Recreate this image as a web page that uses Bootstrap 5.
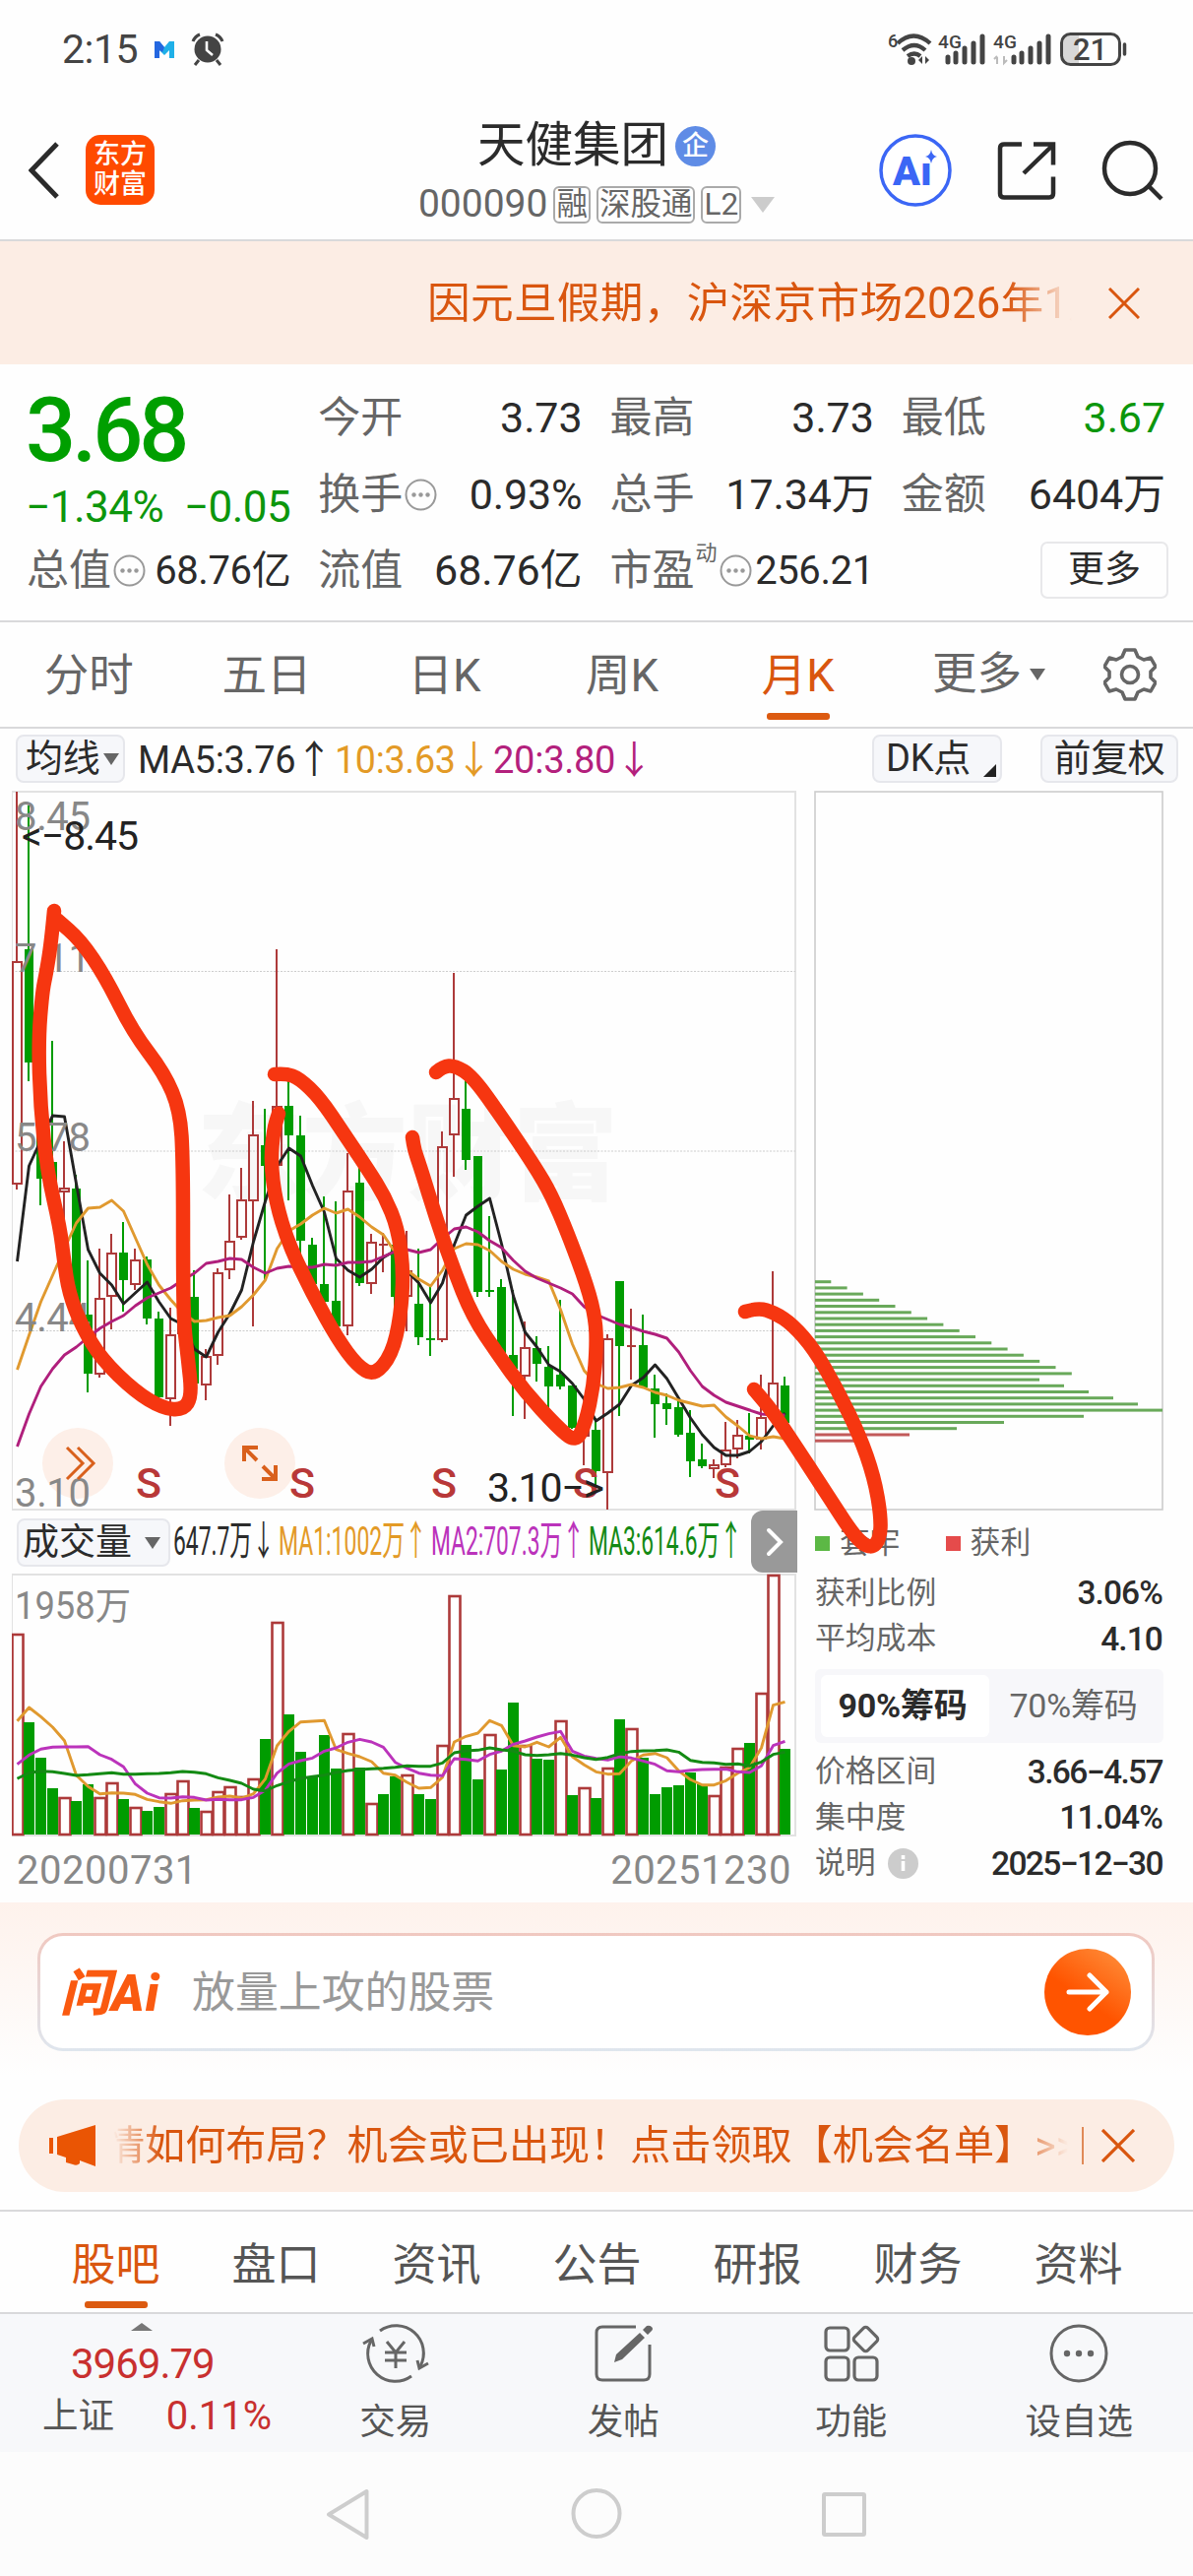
<!DOCTYPE html>
<html lang="zh-CN">

<head>
    <meta charset="UTF-8">
    <meta name="viewport" content="width=device-width, initial-scale=1.0">
    <title>天健集团 000090</title>
    <link href="https://cdn.jsdelivr.net/npm/bootstrap@5.3.2/dist/css/bootstrap.min.css" rel="stylesheet">
    <style>
        body {
            width: 1212px;
            font-family: Roboto, "Noto Sans CJK SC", sans-serif;
            color: #2b2b2b;
            background: #fefefe;
            line-height: 1;
            overflow-x: hidden;
        }

        svg {
            display: block;
            flex: none;
        }

        .nowrap {
            white-space: nowrap;
        }

        .hairline {
            border-bottom: 2px solid #d9d9db;
        }

        .c-label {
            color: #666;
        }

        .c-down {
            color: #0c960c;
        }

        .c-accent {
            color: #d9560f;
        }

        /* Status bar */
        .status-bar {
            height: 100px;
            padding: 0 66px 0 63px;
            color: #444;
        }

        .status-time {
            font-size: 41px;
            letter-spacing: -.5px;
            width: 94px;
        }

        /* Header */
        .top-bar {
            height: 145px;
            padding: 2px 30px 0 29px;
        }

        .app-logo {
            width: 70px;
            height: 71px;
            border-radius: 15px;
            background: #ff4a00;
            color: #fff;
            font-size: 27px;
            line-height: 30px;
            font-weight: 500;
            margin-left: 27px;
            padding-top: 5px;
        }

        .stock-head {
            width: 366px;
            margin-left: 266px;
        }

        .stock-name {
            font-size: 48.5px;
            line-height: 60px;
        }

        .corp-mark {
            width: 41px;
            height: 41px;
            border-radius: 50%;
            background: #5f8ce6;
            color: #fff;
            font-size: 27px;
            font-weight: 500;
            line-height: 40px;
            margin-left: 7px;
        }

        .stock-code {
            font-size: 39px;
            color: #666;
            gap: 6px;
            margin-top: 10px;
        }

        .code-tag {
            height: 38px;
            border: 2px solid #aaa;
            border-radius: 6px;
            font-size: 31.5px;
            line-height: 34px;
            padding: 0 1px;
        }

        .caret {
            width: 0;
            height: 0;
            border: 8px solid transparent;
            border-top: 12px solid #666;
            border-bottom: 0;
        }

        /* Notices */
        .notice-top {
            height: 125px;
            background: #fcede4;
            font-size: 43.7px;
            letter-spacing: .25px;
            padding: 0 54px 0 434px;
        }

        .notice-top .roll {
            width: 655px;
            line-height: 60px;
            overflow: hidden;
            -webkit-mask-image: linear-gradient(90deg, #000 90%, transparent);
            mask-image: linear-gradient(90deg, #000 90%, transparent);
        }

        /* Quote grid */
        .quote {
            height: 262px;
            padding: 16px 28px 0;
            display: grid;
            grid-template-columns: repeat(4, 1fr);
            grid-auto-rows: 77.5px;
            column-gap: 29px;
            font-size: 43px;
        }

        .quote > div {
            display: flex;
            align-items: center;
            justify-content: space-between;
            white-space: nowrap;
        }

        .quote .price {
            font-size: 90px;
            font-weight: 500;
            letter-spacing: -4px;
            margin-left: -2px;
            padding-top: 26px;
            color: #009f00;
        }

        .quote .chg {
            padding: 25px 0 0;
            margin-left: -2px;
            font-size: 44px;
            letter-spacing: -.5px;
        }

        .quote b {
            font-weight: 400;
            letter-spacing: -.1px;
        }

        .quote .tight {
            font-size: 40px;
            letter-spacing: -.4px;
        }

        .quote .c-label {
            display: flex;
            align-items: center;
            gap: 2px;
            margin-left: -1px;
        }

        .quote sup {
            font-size: 22px;
            top: -18px;
            margin: 0 0 0 -1px;
        }

        .more-btn {
            width: 130px;
            height: 58px;
            border: 2px solid #e8e8ea;
            border-radius: 7px;
            font-size: 37px;
            line-height: 53px;
            text-align: center;
            margin-left: auto;
            margin-right: -3px;
            margin-top: -2px;
        }

        /* Period tabs */
        .period-tabs {
            height: 108px;
            font-size: 45.5px;
            color: #666;
            padding-right: 37px;
        }

        .period-tabs .tab {
            width: 180.6px;
            height: 106px;
            line-height: 110px;
            text-align: center;
        }

        .period-tabs .tab-more {
            width: auto;
            margin-left: 44px;
        }

        .period-tabs .tab-on {
            left: -2px;
        }

        .tab-on {
            position: relative;
            color: #d9560f;
        }

        .tab-on::after {
            content: "";
            position: absolute;
            left: 50%;
            bottom: 7px;
            width: 64px;
            height: 7px;
            margin-left: -32px;
            border-radius: 3px;
            background: #dc5a10;
        }

        /* Indicator row */
        .ind-row {
            height: 63px;
            padding: 6px 15px 0 16px;
            font-size: 38px;
            letter-spacing: -.3px;
        }

        .pill {
            height: 49px;
            background: #f6f7fa;
            border: 2px solid #e6e7ec;
            border-radius: 8px;
            line-height: 45px;
            white-space: nowrap;
        }

        /* Charts */
        .chart-area {
            height: 1129px;
        }

        .chart-left {
            width: 798px;
            margin-left: 12px;
        }

        .vol-head {
            height: 64px;
        }

        .vol-next {
            width: 47px;
            height: 63px;
            background: #999;
            border-radius: 12px 0 0 12px;
        }

        .date-row {
            font-size: 40px;
            letter-spacing: .5px;
            line-height: 69px;
            color: #888;
            padding: 0 6px 0 5px;
        }

        .chips {
            width: 356px;
            margin-left: 16px;
            font-size: 30.8px;
        }

        .chips .legend-row {
            height: 61px;
            padding: 6px 0 0 2px;
            color: #666;
        }

        .dot-sq {
            width: 15px;
            height: 15px;
        }

        .chip-row {
            height: 46.3px;
            padding: 0 1px 0 2px;
            color: #666;
        }

        .chip-row b {
            font-weight: 500;
            font-size: 33.5px;
            letter-spacing: -.9px;
            color: #2b2b2b;
        }

        .chip-row .dashed {
            letter-spacing: -1.6px;
        }

        .seg {
            height: 75px;
            margin: 7px 0 7px 2px;
            padding: 6px;
            background: #f7f7fa;
            border-radius: 6px;
            font-size: 34px;
        }

        .seg > div {
            width: 171px;
            line-height: 63px;
            text-align: center;
            border-radius: 6px;
            color: #666;
            white-space: nowrap;
            letter-spacing: -.2px;
        }

        .seg > .seg-on {
            background: #fff;
            color: #2b2b2b;
            font-weight: 700;
            padding-right: 5px;
        }

        .scribble {
            position: absolute;
            left: 0;
            top: 0;
        }

        /* AI search */
        .ai-zone {
            height: 200px;
            padding: 31px 39px 0 38px;
            background: linear-gradient(#fef2ec, #fefefe 88%);
        }

        .ai-box {
            height: 120px;
            border: 3px solid transparent;
            border-radius: 26px;
            background: linear-gradient(#fff, #fff) padding-box, linear-gradient(#f0c8c0, #dfe6ee) border-box;
            padding: 0 21px 0 20px;
        }

        .ai-word {
            width: 134px;
            font-size: 51px;
            font-weight: 900;
            font-style: italic;
            letter-spacing: 1px;
            color: #fa5a10;
            padding-top: 2px;
        }

        .ai-hint {
            font-size: 43.9px;
            color: #999;
            padding-top: 4px;
        }

        .notice-pill {
            height: 94px;
            margin: 0 19px 18px;
            border-radius: 47px;
            background: #fcede4;
            font-size: 41.1px;
            padding: 0 40px 0 31px;
        }

        .notice-pill .roll {
            width: 970px;
            margin-left: 18px;
            line-height: 62px;
            overflow: hidden;
            text-indent: -9px;
            -webkit-mask-image: linear-gradient(90deg, transparent, #000 5%, #000 94%, transparent);
            mask-image: linear-gradient(90deg, transparent, #000 5%, #000 94%, transparent);
        }

        .vline {
            width: 2px;
            height: 38px;
            background: #e08a58;
        }

        /* Bottom tabs */
        .info-tabs {
            height: 104px;
            border-top: 2px solid #d9d9db;
            font-size: 45px;
            color: #555;
            padding: 0 35px 0 36px;
        }

        .info-tabs > div {
            flex: 1 0 0;
            text-align: center;
            line-height: 110px;
            height: 102px;
        }

        .info-tabs .tab-on {
            color: #d9560f;
        }

        .info-tabs .tab-on::after {
            bottom: 4px;
        }

        .dock {
            height: 142px;
            background: #f7f8fa;
            border-top: 2px solid #d9d9db;
            font-size: 36.5px;
            color: #555;
        }

        .dock .idx {
            width: 286px;
            padding: 9px 10px 0 43px;
        }

        .dock .idx-val {
            font-size: 42px;
            letter-spacing: -1px;
            line-height: 52px;
            margin-left: 29px;
            margin-top: 8px;
        }

        .dock .item {
            width: 231.5px;
            padding-top: 9px;
        }

        .dock .item span {
            line-height: 40px;
            margin-top: 19px;
        }

        .c-up {
            color: #c8302f;
        }

        .sys-nav {
            height: 126px;
            background: #fcfcfc;
        }
    </style>
</head>

<body>
    <!-- Status bar -->
    <div class="status-bar d-flex align-items-center">
        <div class="status-time">2:15</div>
        <svg width="20" height="19" viewBox="0 0 20 19">
            <path d="M0 1h5l5 6 5-6h5v17h-5v-8l-5 5-5-5v8H0z" fill="#1fb0e8" />
            <path d="M0 1h5l5 6-2 5-3-2v8H0z" fill="#2467e0" />
        </svg>
        <svg class="ms-3" width="36" height="34" viewBox="0 0 36 34">
            <circle cx="18" cy="17" r="13.5" fill="#444" />
            <path d="M3 9q2-5 7-7M33 9q-2-5-7-7M9 28l-4 5M27 28l4 5" stroke="#444" stroke-width="3" fill="none" />
            <path d="M17 9v9l6 5" stroke="#fff" stroke-width="2.6" fill="none" />
        </svg>
        <svg class="ms-auto" width="245" height="40" viewBox="901 29 245 40">
            <g fill="#444" font-family="Roboto" font-weight="500">
                <text x="902" y="47" font-size="18">6</text>
                <text x="953" y="48" font-size="19" textLength="24">4G</text>
                <text x="1009" y="48" font-size="19" textLength="24">4G</text>
            </g>
            <g fill="none" stroke="#444" stroke-width="4.300">
                <path d="M912 43q16-15 33 0M917 50q12-10 23 0M922 56q7-5 13 0" />
            </g>
            <circle cx="926" cy="61" r="4" fill="#444" />
            <path d="M933 60l4-4v8zM940 56l4 4-4 4z" fill="#444" />
            <g stroke="#444" stroke-width="5" stroke-linecap="round">
                <path d="M963 57v5M971 53v9M980 48v14M989 43v19M998 36v26" />
                <path d="M1030 57v5M1038 53v9M1047 48v14M1056 43v19M1065 36v26" />
            </g>
            <path d="M1013 57v7M1010 59l3-3M1020 56v7l3-3" stroke="#bbb" stroke-width="2" fill="none" />
            <path d="M1079 41q0-7 8-7h9v29h-9q-8 0-8-7z" fill="#d8d8d8" />
            <rect x="1078.500" y="33.500" width="59" height="31" rx="9" fill="none" stroke="#444" stroke-width="3" />
            <path d="M1142.500 44v10" stroke="#444" stroke-width="3.500" stroke-linecap="round" />
            <text x="1090" y="60" font-size="31" font-weight="500" font-family="Roboto" fill="#444">21</text>
        </svg>
    </div>

    <!-- Header -->
    <header class="top-bar hairline d-flex align-items-center">
        <svg width="31" height="58" viewBox="0 0 31 58">
            <path d="M29 2L3 29l26 27" fill="none" stroke="#2b2b2b" stroke-width="5" />
        </svg>
        <div class="app-logo text-center">东方<br>财富</div>
        <div class="stock-head">
            <div class="d-flex justify-content-center align-items-center stock-name">天健集团<span class="corp-mark text-center">企</span></div>
            <div class="d-flex justify-content-center align-items-center stock-code nowrap">000090
                <span class="code-tag">融</span><span class="code-tag">深股通</span><span class="code-tag">L2</span>
                <svg class="ms-1" width="24" height="16"><path d="M0 0h24L12 16z" fill="#ccc" /></svg>
            </div>
        </div>
        <svg class="ms-auto" width="290" height="76" viewBox="892 136 290 76">
            <circle cx="930" cy="174" r="35" fill="#fff" stroke="#3b66f5" stroke-width="3.500" />
            <text x="907" y="189" font-size="41" font-weight="900" font-family="Roboto" fill="#3b66f5">Aı</text>
            <path d="M946 153q1 6 6 7-5 1-6 7-1-6-6-7 5-1 6-7z" fill="#3b66f5" />
            <g fill="none" stroke="#2b2b2b" stroke-width="4.500">
                <path d="M1038 147.500h-18q-4 0-4 4v46q0 4 4 4h46q4 0 4-4v-17M1050 147.500h20v21M1070 148l-30 29" />
                <circle cx="1148" cy="172" r="26" />
                <path d="M1167 190l13 13" />
            </g>
        </svg>
    </header>

    <div class="notice-top d-flex align-items-center justify-content-between c-accent">
        <div class="roll nowrap">因元旦假期，沪深京市场2026年1月1日</div>
        <svg width="32" height="32"><path d="M1 1l30 30M31 1L1 31" stroke="#d9560f" stroke-width="3" /></svg>
    </div>

    <!-- Quote -->
    <section class="quote hairline">
        <div class="price">3.68</div>
        <div><span class="c-label">今开</span><b>3.73</b></div>
        <div><span class="c-label">最高</span><b>3.73</b></div>
        <div><span class="c-label">最低</span><b class="c-down">3.67</b></div>
        <div class="chg c-down"><span>−1.34%</span><span>−0.05</span></div>
        <div><span class="c-label">换手<svg width="33" height="33" viewBox="0 0 33 33"><use href="#dots" /></svg></span><b>0.93%</b></div>
        <div><span class="c-label">总手</span><b>17.34万</b></div>
        <div><span class="c-label">金额</span><b>6404万</b></div>
        <div><span class="c-label">总值<svg width="33" height="33" viewBox="0 0 33 33"><use href="#dots" /></svg></span><b class="tight">68.76亿</b></div>
        <div><span class="c-label">流值</span><b>68.76亿</b></div>
        <div><span class="c-label">市盈<sup>动</sup><svg width="33" height="33" viewBox="0 0 33 33"><use href="#dots" /></svg></span><b class="tight">256.21</b></div>
        <div><span class="more-btn">更多</span></div>
    </section>
    <svg width="0" height="0" class="position-absolute">
        <g id="dots">
            <circle cx="16.500" cy="16.500" r="15" fill="none" stroke="#999" stroke-width="2" />
            <g fill="#999">
                <circle cx="9.500" cy="16.500" r="2.200" />
                <circle cx="16.500" cy="16.500" r="2.200" />
                <circle cx="23.500" cy="16.500" r="2.200" />
            </g>
        </g>
    </svg>

    <!-- Period tabs -->
    <nav class="period-tabs hairline d-flex align-items-center">
        <div class="tab">分时</div>
        <div class="tab">五日</div>
        <div class="tab">日K</div>
        <div class="tab">周K</div>
        <div class="tab tab-on">月K</div>
        <div class="tab tab-more d-flex align-items-center">更多<i class="caret ms-2"></i></div>
        <svg class="ms-auto" width="54" height="54" viewBox="-27 -27 54 54">
            <path d="M-5-25H5L8-18L14-15L21-17L26-8L21-3V3L26 8L21 17L14 15L8 18L5 25H-5L-8 18L-14 15L-21 17L-26 8L-21 3V-3L-26-8L-21-17L-14-15L-8-18Z" fill="none" stroke="#666" stroke-width="3.600" stroke-linejoin="round" />
            <circle r="8.500" fill="none" stroke="#666" stroke-width="3.600" />
        </svg>
    </nav>

    <!-- Indicator row -->
    <div class="ind-row d-flex nowrap">
        <div class="pill d-flex align-items-center ps-2 pe-1" style="width:111px">均线<i class="caret ms-1"></i></div>
        <svg width="540" height="50" viewBox="127 745 540 50" font-size="39">
            <text x="140" y="784" textLength="198" lengthAdjust="spacingAndGlyphs" fill="#2b2b2b">MA5:3.76↑</text>
            <text x="340" y="784" textLength="160" lengthAdjust="spacingAndGlyphs" fill="#e39a26">10:3.63↓</text>
            <text x="501" y="784" textLength="162" lengthAdjust="spacingAndGlyphs" fill="#b3207c">20:3.80↓</text>
        </svg>
        <div class="pill ms-auto d-flex" style="width:132px"><span class="ps-2 ms-1">DK点</span>
            <svg class="align-self-end ms-auto me-1 mb-1" width="13" height="13"><path d="M13 0v13H0z" fill="#222" /></svg>
        </div>
        <div class="pill text-center" style="width:140px;margin-left:39px">前复权</div>
    </div>

    <!-- Charts -->
    <main class="chart-area d-flex position-relative">
        <div class="chart-left">
            <svg id="kline" width="798" height="731" viewBox="12 803 798 731"></svg>
            <div class="vol-head d-flex justify-content-between">
                <div class="pill d-flex align-items-center mt-2" style="width:156px;margin-left:5px;padding-left:4px;font-size:37px">成交量<i class="caret" style="margin-left:13px"></i></div>
                <svg width="585" height="60" viewBox="174 1535 585 60" font-size="41">
                    <text x="174" y="1580" textLength="103" lengthAdjust="spacingAndGlyphs" fill="#2b2b2b">647.7万↓</text>
                    <text x="281" y="1580" textLength="151" lengthAdjust="spacingAndGlyphs" fill="#e39a26">MA1:1002万↑</text>
                    <text x="436" y="1580" textLength="156" lengthAdjust="spacingAndGlyphs" fill="#bb33bb">MA2:707.3万↑</text>
                    <text x="596" y="1580" textLength="156" lengthAdjust="spacingAndGlyphs" fill="#138a13">MA3:614.6万↑</text>
                </svg>
                <div class="vol-next d-flex align-items-center justify-content-center">
                    <svg width="20" height="32"><path d="M4 4l12 12L4 28" fill="none" stroke="#fff" stroke-width="4" stroke-linecap="round" /></svg>
                </div>
            </div>
            <svg id="volume" width="798" height="267" viewBox="12 1598 798 267"></svg>
            <div class="date-row d-flex justify-content-between"><span>20200731</span><span>20251230</span></div>
        </div>

        <div class="chips">
            <svg id="chipBars" width="356" height="731" viewBox="826 803 356 731"></svg>
            <div class="legend-row d-flex align-items-center">
                <i class="dot-sq" style="background:#5cb845"></i><span style="margin-left:10px">套牢</span>
                <i class="dot-sq" style="background:#e54b4b;margin-left:46px"></i><span style="margin-left:10px">获利</span>
            </div>
            <div class="chip-row d-flex justify-content-between align-items-center">获利比例<b>3.06%</b></div>
            <div class="chip-row d-flex justify-content-between align-items-center">平均成本<b>4.10</b></div>
            <div class="seg d-flex">
                <div class="seg-on">90%筹码</div>
                <div>70%筹码</div>
            </div>
            <div class="chip-row d-flex justify-content-between align-items-center">价格区间<b class="dashed">3.66−4.57</b></div>
            <div class="chip-row d-flex justify-content-between align-items-center">集中度<b>11.04%</b></div>
            <div class="chip-row d-flex align-items-center">说明
                <svg style="margin-left:12px" width="31" height="31"><circle cx="15.500" cy="15.500" r="15.500" fill="#ccc" /><path d="M15.500 13v10M15.500 7v4" stroke="#fff" stroke-width="3.600" /></svg>
                <b class="dashed ms-auto">2025−12−30</b>
            </div>
        </div>

        <!-- Hand drawn marks over both charts -->
        <svg class="scribble" width="1212" height="1129" viewBox="0 803 1212 1129">
            <g id="marks" fill="none" stroke="#f63610" stroke-width="14.500" stroke-linecap="round" stroke-linejoin="round"></g>
        </svg>
    </main>

    <!-- AI search -->
    <section class="ai-zone">
        <div class="ai-box d-flex align-items-center">
            <div class="ai-word nowrap">问Ai</div>
            <div class="ai-hint">放量上攻的股票</div>
            <svg class="ms-auto" width="88" height="88">
                <defs>
                    <linearGradient id="go" x1="1" y1="0" x2=".3" y2="1">
                        <stop offset="0" stop-color="#ff9440" />
                        <stop offset=".65" stop-color="#ff5400" />
                    </linearGradient>
                </defs>
                <circle cx="44" cy="44" r="44" fill="url(#go)" />
                <path d="M25 44h38M46 27l17 17-17 17" fill="none" stroke="#fff" stroke-width="5" stroke-linecap="round" stroke-linejoin="round" />
            </svg>
        </div>
    </section>

    <div class="notice-pill d-flex align-items-center c-accent">
        <svg width="47" height="42" viewBox="0 0 47 42">
            <path d="M0 13h4v16H0zM8 12L47 0v42L31 36v3q-3 3-7 1l-7-2v-5l-9-3z" fill="#ea5504" />
        </svg>
        <div class="roll nowrap">情如何布局？机会或已出现！点击领取【机会名单】&gt;&gt;</div>
        <div class="vline ms-auto"></div>
        <svg style="margin-left:18px" width="34" height="34"><path d="M1 1l32 32M33 1L1 33" stroke="#d9560f" stroke-width="3.200" /></svg>
    </div>

    <!-- Info tabs -->
    <nav class="info-tabs d-flex">
        <div class="tab-on">股吧</div>
        <div>盘口</div>
        <div>资讯</div>
        <div>公告</div>
        <div>研报</div>
        <div>财务</div>
        <div>资料</div>
    </nav>

    <!-- Dock -->
    <footer class="dock d-flex">
        <div class="idx">
            <svg style="margin-left:90px" width="22" height="8"><path d="M0 8L11 0l11 8z" fill="#777" /></svg>
            <div class="idx-val c-up">3969.79</div>
            <div class="d-flex justify-content-between align-items-center" style="margin-top:7px">上证<span class="c-up" style="font-size:40px">0.11%</span></div>
        </div>
        <div class="item d-flex flex-column align-items-center">
            <svg width="68" height="62" viewBox="-34 -31 68 62">
                <g fill="none" stroke="#666" stroke-width="3">
                    <path d="M-16-23A28 28 0 0 1 25 13M16 23A28 28 0 0 1-25-13" />
                    <path d="M-33-10l9-5 2 8M33 10l-9 5-2-8" />
                    <path d="M-9-12L0-1 9-12M0-1v16M-11-1h22M-11 7h22" />
                </g>
            </svg>
            <span>交易</span>
        </div>
        <div class="item d-flex flex-column align-items-center">
            <svg width="62" height="62" viewBox="-31 -31 62 62">
                <path d="M13-27h-34q-6 0-6 6v42q0 6 6 6h42q6 0 6-6v-30" fill="none" stroke="#666" stroke-width="3" />
                <path d="M-9 9l2-8 24-22 5 5L-1 6zM20-24l4-4q3-1 5 1 2 2 0 4l-4 4z" fill="#666" />
            </svg>
            <span>发帖</span>
        </div>
        <div class="item d-flex flex-column align-items-center">
            <svg width="62" height="62" viewBox="-31 -31 62 62">
                <g fill="none" stroke="#666" stroke-width="3.200">
                    <rect x="-26" y="-26" width="23" height="23" rx="4" />
                    <rect x="-26" y="4" width="23" height="23" rx="4" />
                    <rect x="3" y="4" width="23" height="23" rx="4" />
                    <rect x="5" y="-24" width="19" height="19" rx="3" transform="rotate(45 14.500 -14.500)" />
                </g>
            </svg>
            <span>功能</span>
        </div>
        <div class="item d-flex flex-column align-items-center">
            <svg width="62" height="62" viewBox="-31 -31 62 62">
                <circle r="28" fill="none" stroke="#666" stroke-width="3" />
                <g fill="#666">
                    <circle cx="-12" r="3.200" />
                    <circle r="3.200" />
                    <circle cx="12" r="3.200" />
                </g>
            </svg>
            <span>设自选</span>
        </div>
    </footer>

    <div class="sys-nav">
        <svg width="1212" height="126" viewBox="0 2490 1212 126">
            <g fill="none" stroke="#cdcdcd" stroke-width="4" stroke-linejoin="round">
                <path d="M372.500 2530v47L334 2553.500z" />
                <circle cx="606" cy="2552.500" r="23.500" />
                <rect x="837" y="2533" width="41" height="41" rx="1" />
            </g>
        </svg>
    </div>

    <script>
        const RED = '#ad3a3a';
        const GREEN = '#009c00';
        const cx = i => 17 + 12 * i;

        // [up, high, bodyTop, bodyBottom, low]
        const candles = [
            [1, 804, 976, 1203, 1208], [0, 818, 964, 1079, 1098], [0, 1060, 1079, 1197, 1224], [0, 1057, 1180, 1212, 1230],
            [1, 1159, 1206, 1211, 1242], [0, 1193, 1207, 1330, 1332], [0, 1280, 1335, 1395, 1414], [1, 1268, 1318, 1396, 1399],
            [1, 1253, 1272, 1317, 1350], [0, 1241, 1272, 1300, 1332], [1, 1268, 1279, 1305, 1310], [0, 1276, 1279, 1339, 1345],
            [0, 1332, 1339, 1419, 1422], [1, 1328, 1355, 1421, 1448], [1, 1318, 1322, 1355, 1360], [0, 1290, 1317, 1405, 1406],
            [1, 1370, 1377, 1407, 1422], [1, 1288, 1292, 1377, 1386], [1, 1213, 1260, 1290, 1299], [1, 1186, 1218, 1257, 1259],
            [1, 1118, 1152, 1220, 1347], [0, 1126, 1163, 1184, 1300], [1, 964, 1123, 1184, 1187], [0, 1098, 1123, 1153, 1219],
            [0, 1133, 1153, 1260, 1280], [0, 1257, 1264, 1304, 1306], [0, 1215, 1304, 1322, 1325], [0, 1220, 1321, 1347, 1348],
            [1, 1171, 1209, 1347, 1356], [0, 1175, 1201, 1303, 1306], [1, 1253, 1261, 1304, 1314], [1, 1252, 1263, 1264, 1292],
            [0, 1255, 1264, 1317, 1328], [1, 1250, 1290, 1317, 1352], [0, 1268, 1324, 1358, 1366], [0, 1306, 1359, 1361, 1377],
            [1, 1149, 1164, 1361, 1363], [1, 988, 1115, 1153, 1195], [0, 1090, 1126, 1178, 1188], [0, 1174, 1174, 1312, 1317],
            [0, 1235, 1310, 1312, 1317], [0, 1299, 1307, 1374, 1375], [0, 1310, 1376, 1390, 1438], [1, 1342, 1368, 1398, 1441],
            [0, 1357, 1369, 1385, 1403], [0, 1367, 1388, 1408, 1435], [0, 1320, 1396, 1408, 1411], [0, 1407, 1407, 1450, 1451],
            [1, 1440, 1450, 1459, 1488], [0, 1440, 1452, 1494, 1508], [1, 1355, 1359, 1496, 1533], [0, 1301, 1301, 1367, 1438],
            [1, 1329, 1366, 1367, 1401], [0, 1335, 1366, 1409, 1410], [0, 1396, 1410, 1426, 1460], [0, 1415, 1425, 1431, 1447],
            [0, 1420, 1429, 1457, 1459], [0, 1432, 1455, 1484, 1500], [0, 1466, 1482, 1489, 1491], [1, 1482, 1487, 1492, 1501],
            [1, 1444, 1472, 1488, 1490], [1, 1442, 1457, 1472, 1481], [0, 1435, 1458, 1462, 1476], [1, 1396, 1439, 1462, 1472],
            [1, 1291, 1404, 1439, 1440], [0, 1398, 1407, 1445, 1447]
        ];

        const ma5 = [1281, 1184, 1158, 1133, 1134, 1202, 1269, 1293, 1305, 1324, 1313, 1302, 1322, 1339, 1345, 1370, 1378, 1353, 1334, 1310, 1261, 1220, 1184, 1166, 1174, 1204, 1231, 1278, 1290, 1297, 1289, 1277, 1270, 1291, 1303, 1323, 1303, 1264, 1234, 1225, 1217, 1263, 1316, 1353, 1368, 1386, 1393, 1405, 1421, 1443, 1435, 1426, 1407, 1399, 1386, 1400, 1420, 1440, 1457, 1470, 1478, 1478, 1474, 1464, 1448, 1435];
        const ma10 = [1391, 1356, 1322, 1295, 1268, 1242, 1227, 1226, 1219, 1230, 1257, 1284, 1305, 1320, 1333, 1342, 1341, 1338, 1336, 1327, 1315, 1300, 1268, 1250, 1243, 1234, 1227, 1232, 1228, 1236, 1246, 1254, 1272, 1290, 1299, 1306, 1290, 1268, 1263, 1264, 1270, 1281, 1289, 1294, 1297, 1301, 1330, 1365, 1392, 1405, 1410, 1409, 1406, 1409, 1414, 1417, 1422, 1425, 1428, 1427, 1439, 1448, 1458, 1461, 1459, 1461];
        const ma20 = [1469, 1436, 1408, 1390, 1376, 1368, 1358, 1349, 1342, 1336, 1326, 1318, 1313, 1308, 1300, 1293, 1283, 1281, 1278, 1279, 1287, 1293, 1288, 1286, 1287, 1287, 1284, 1285, 1282, 1282, 1281, 1276, 1271, 1269, 1272, 1269, 1258, 1248, 1246, 1251, 1260, 1267, 1280, 1291, 1298, 1303, 1308, 1314, 1327, 1335, 1340, 1345, 1348, 1352, 1355, 1359, 1373, 1392, 1408, 1417, 1424, 1428, 1432, 1436, 1437, 1437];

        const volTops = [1660, 1749, 1785, 1816, 1826, 1829, 1812, 1826, 1811, 1827, 1836, 1839, 1835, 1822, 1809, 1836, 1840, 1820, 1815, 1825, 1807, 1766, 1648, 1741, 1779, 1804, 1762, 1796, 1761, 1795, 1832, 1822, 1804, 1803, 1822, 1827, 1773, 1621, 1772, 1807, 1762, 1797, 1729, 1773, 1786, 1787, 1748, 1823, 1816, 1826, 1796, 1746, 1756, 1785, 1822, 1815, 1813, 1800, 1812, 1824, 1795, 1776, 1770, 1720, 1600, 1776];
        // volume bars that differ in direction from their candle
        const volDown = [31];
        const volUp = [40, 46];

        const vma1 = [653, 612, 640, 672, 713, 818, 853, 875, 872, 873, 877, 892, 899, 904, 896, 894, 893, 885, 882, 888, 875, 830, 728, 685, 656, 654, 652, 740, 752, 762, 777, 812, 818, 840, 858, 856, 825, 717, 700, 690, 652, 667, 728, 732, 718, 732, 703, 762, 787, 808, 815, 814, 775, 757, 752, 765, 805, 832, 848, 848, 835, 812, 795, 735, 605, 595];
        const vma2 = [785, 757, 739, 733, 732, 732, 731, 756, 770, 793, 845, 873, 887, 888, 884, 886, 894, 892, 893, 893, 886, 864, 812, 784, 774, 766, 745, 735, 718, 709, 717, 733, 779, 797, 812, 818, 820, 768, 770, 775, 755, 745, 724, 714, 702, 692, 685, 745, 760, 767, 772, 762, 766, 775, 785, 805, 808, 803, 801, 800, 800, 808, 810, 790, 728, 715];
        const vma3 = [829, 811, 806, 808, 813, 819, 817, 814, 811, 815, 815, 814, 813, 811, 807, 809, 814, 826, 834, 843, 861, 866, 850, 838, 828, 823, 818, 810, 804, 801, 799, 797, 794, 790, 791, 791, 781, 750, 744, 742, 735, 741, 745, 756, 758, 756, 752, 757, 765, 770, 764, 753, 746, 744, 743, 741, 748, 773, 779, 781, 785, 784, 790, 778, 755, 748];

        function line(values, color, map) {
            const pts = values.map((v, i) => `${cx(i) + .5},${map ? map(v) : v}`).join(' ');
            return `<polyline points="${pts}" fill="none" stroke="${color}" stroke-width="2.9" stroke-linejoin="round"/>`;
        }

        function drawKline() {
            let s = `<text x="200" y="1210" font-size="107" font-weight="900" fill="#f7f7f7">东方财富</text>`;
            s += `<path d="M12 804H808V1533H12" fill="none" stroke="#e2e2e2" stroke-width="2"/><path d="M12.500 804V1533" stroke="#e2e2e2"/>`;
            [986.5, 1169, 1351.5].forEach(y => {
                s += `<path d="M12 ${y}H808" stroke="#ccc" stroke-width="1" stroke-dasharray="2 1.500"/>`;
            });
            candles.forEach(([up, h, t, b, l], i) => {
                const x = cx(i);
                const c = up ? RED : GREEN;
                s += `<path d="M${x} ${h}V${t}M${x} ${b}V${l}" stroke="${c}" stroke-width="2"/>`;
                if (up && b - t > 2) {
                    s += `<rect x="${x - 4}" y="${t + 1}" width="9" height="${b - t - 2 || 1}" fill="none" stroke="${c}" stroke-width="2"/>`;
                } else {
                    s += `<rect x="${x - 4}" y="${t}" width="9" height="${Math.max(b - t, 2)}" fill="${c}"/>`;
                }
            });
            s += line(ma5, '#222') + line(ma10, '#e0992f') + line(ma20, '#b01f7c');
            [['8.45', 843], ['7.11', 987], ['5.78', 1169], ['4.44', 1352]].forEach(([t, y]) => {
                s += `<text x="15" y="${y}" font-size="40" textLength="77" fill="#888">${t}</text>`;
            });
            [79, 264].forEach(x => s += `<circle cx="${x}" cy="1486" r="36" fill="#fdefe8"/>`);
            s += `<text x="15" y="1530" font-size="40" textLength="77" fill="#888">3.10</text>`;
            s += `<g fill="none" stroke="#d9601c" stroke-width="3"><path d="M68 1470l16 16-16 16M79 1470l16 16-16 16"/>
                <path d="M248 1484v-14h14M248 1470l13 13M266 1502h14v-14M280 1502l-13-13" stroke-width="4"/></g>`;
            [151, 307, 451, 595, 739].forEach(x => {
                s += `<text x="${x}" y="1521" font-size="43" font-weight="500" text-anchor="middle" fill="#b83838">S</text>`;
            });
            s += `<text x="22" y="863" font-size="41" textLength="119" fill="#222">&lt;−8.45</text>`;
            s += `<text x="495" y="1525" font-size="41" textLength="119" fill="#222">3.10−&gt;</text>`;
            document.getElementById('kline').innerHTML = s;
        }

        function drawVolume() {
            let s = `<path d="M12 1599H808V1864H12" fill="none" stroke="#e2e2e2" stroke-width="2"/><path d="M12.500 1599V1863" stroke="#e2e2e2"/>`;
            volTops.forEach((t, i) => {
                const x = cx(i);
                if (volUp.includes(i) || (candles[i][0] && !volDown.includes(i))) {
                    s += `<rect x="${x - 4.5}" y="${t}" width="11" height="${1863 - t}" fill="#fff" stroke="${RED}" stroke-width="2.600"/>`;
                } else {
                    s += `<rect x="${x - 5}" y="${t}" width="11" height="${1863 - t}" fill="${GREEN}"/>`;
                }
            });
            const map = v => (1530 + v / 3).toFixed(1);
            s += line(vma1, '#e0992f', map) + line(vma2, '#bb33bb', map) + line(vma3, '#138a13', map);
            s += `<text x="15" y="1644" font-size="38" textLength="118" lengthAdjust="spacingAndGlyphs" fill="#888">1958万</text>`;
            document.getElementById('volume').innerHTML = s;
        }

        function drawChips() {
            const widths = [];
            for (let i = 1; i <= 16; i++) widths.push(16.3 * i);
            widths.push(228, 253, 278, 303, 328, 353, 273, 192, 144, 96, 46);
            let s = `<rect x="828" y="804" width="353" height="729" fill="none" stroke="#ccc" stroke-width="1.600"/>`;
            widths.forEach((w, i) => {
                s += `<rect x="828" y="${(1300.2 + 6.21 * i).toFixed(1)}" width="${w.toFixed(1)}" height="3" fill="${i > 24 ? '#c25a5a' : '#69a95a'}"/>`;
            });
            document.getElementById('chipBars').innerHTML = s;
        }

        const strokes = [
            [[55, 925], [52, 957], [47, 988], [43, 1007], [39, 1057], [41, 1123], [48, 1190], [61, 1247], [65, 1280], [70, 1313], [83, 1347], [103, 1380], [137, 1413], [165, 1430], [186, 1432], [195, 1418], [191, 1380], [187, 1347], [186, 1300], [186, 1180], [183, 1128], [167, 1090], [135, 1048], [107, 992], [82, 955], [58, 934]],
            [[279, 1091], [290, 1090], [304, 1095], [325, 1115], [350, 1152], [374, 1188], [391, 1215], [404, 1247], [410, 1290], [407, 1337], [398, 1376], [380, 1397], [363, 1387], [343, 1360], [317, 1313], [293, 1263], [280, 1220], [275, 1180], [278, 1147], [283, 1131]],
            [[443, 1089], [450, 1083], [462, 1082], [480, 1093], [510, 1135], [543, 1184], [560, 1213], [577, 1253], [597, 1307], [605, 1340], [606, 1367], [603, 1407], [595, 1445], [585, 1465], [566, 1449], [533, 1413], [507, 1377], [480, 1337], [460, 1287], [443, 1237], [427, 1185], [421, 1168], [419, 1155]],
            [[757, 1332], [770, 1328], [787, 1333], [805, 1345], [827, 1370], [850, 1410], [873, 1457], [888, 1500], [895, 1540], [894, 1563], [885, 1573], [869, 1562], [840, 1517], [802, 1459], [783, 1431], [766, 1411]]
        ];

        // Smooth a point list through the segment midpoints
        function smooth(p) {
            let d = `M${p[0]}`;
            for (let i = 1; i < p.length - 1; i++) {
                const mx = (p[i][0] + p[i + 1][0]) / 2;
                const my = (p[i][1] + p[i + 1][1]) / 2;
                d += `Q${p[i]} ${mx},${my}`;
            }
            return d + `L${p[p.length - 1]}`;
        }

        drawKline();
        drawVolume();
        drawChips();
        document.getElementById('marks').innerHTML = strokes.map(p => `<path d="${smooth(p)}"/>`).join('');
    </script>
    <script src="https://cdn.jsdelivr.net/npm/bootstrap@5.3.2/dist/js/bootstrap.bundle.min.js"></script>
</body>

</html>
